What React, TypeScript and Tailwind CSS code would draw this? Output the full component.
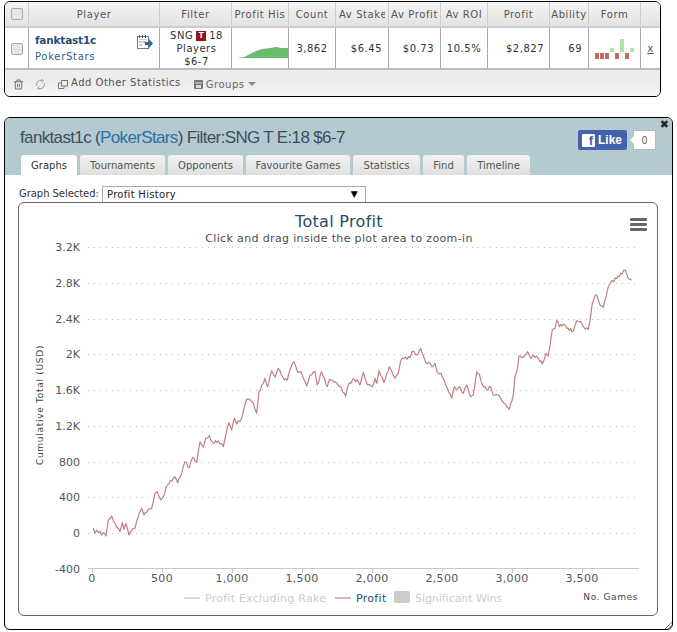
import { Trash2 } from "lucide-react";

const font = "font-['DejaVu_Sans',sans-serif]";

// Traced from the reference, page coordinates
const left = [
  [40, 565], [45, 580], [50, 570], [55, 578], [60, 574], [65, 585], [70, 578], [78, 588], [85, 540], [95, 528],
  [105, 550], [115, 565], [120, 575], [127, 548], [132, 568], [138, 550], [147, 585], [155, 572], [165, 565], [175, 530],
  [185, 505], [192, 525], [205, 508], [215, 505], [225, 460], [232, 455], [243, 480], [250, 470], [262, 435], [280, 415],
  [285, 410], [293, 428], [305, 400], [315, 365], [328, 383], [338, 352], [350, 367], [360, 305], [370, 322], [377, 295],
  [388, 287], [398, 308], [415, 303], [430, 320], [440, 270], [447, 248], [455, 270], [463, 235], [470, 252], [485, 235],
  [490, 215], [500, 178], [510, 178], [520, 190], [530, 220], [537, 155], [550, 130], [555, 115], [563, 140], [575, 92],
  [585, 112], [595, 85], [613, 120], [622, 120], [632, 85], [642, 65], [653, 98], [663, 95], [680, 138], [690, 105],
  [705, 95], [712, 135], [725, 95], [742, 140], [748, 118], [765, 125], [780, 140], [797, 168], [803, 140], [818, 118],
  [835, 125],
].map(([x, y]) => [80 + x / 3, 340 + y / 3]);

const right = [
  [0, 405], [10, 367], [20, 400], [37, 410], [45, 385], [50, 400], [57, 362], [72, 398], [88, 350], [105, 385],
  [115, 370], [122, 333], [132, 325], [150, 323], [157, 303], [172, 315], [182, 295], [197, 337], [210, 340], [215, 350],
  [225, 340], [232, 368], [243, 370], [255, 400], [275, 445], [283, 410], [290, 420], [297, 410], [310, 430], [320, 405],
  [332, 440], [340, 435], [350, 365], [358, 372], [365, 400], [380, 420], [392, 410], [400, 435], [415, 435], [432, 460],
  [448, 478], [460, 435], [465, 380], [472, 360], [477, 318], [490, 322], [503, 305], [513, 325], [520, 315], [535, 325],
  [547, 342], [558, 310], [565, 318], [577, 240], [585, 235], [590, 210], [598, 230], [610, 222], [620, 235], [640, 243],
  [650, 212], [662, 215], [672, 232], [685, 238], [690, 212], [697, 160], [705, 135], [710, 135], [720, 165], [730, 172],
  [738, 140], [745, 110], [752, 98], [770, 85], [795, 60], [805, 85], [815, 90],
].map(([x, y]) => [360 + x / 3, 250 + y / 3]);

// small repeatable wobble between the traced points, the real series is noisy
const traced = [...left, ...right];
const noisy: number[][] = [];
traced.forEach(([x, y], i) => {
  noisy.push([x, y]);
  const next = traced[i + 1];
  if (!next) return;
  const steps = Math.max(1, Math.floor((next[0] - x) / 1.3));
  for (let s = 1; s < steps; s++) {
    const t = s / steps;
    const wobble = Math.sin((i + 1) * 12.9898 + s * 78.233) * 1.3;
    noisy.push([x + (next[0] - x) * t, y + (next[1] - y) * t + wobble]);
  }
});

const profitLine = noisy
  .map(([x, y], i) => `${i === 0 ? "M" : "L"}${x.toFixed(1)} ${y.toFixed(1)}`)
  .join(" ");

const yTicks = [
  ["3.2K", 247], ["2.8K", 283], ["2.4K", 319], ["2K", 354], ["1.6K", 390],
  ["1.2K", 426], ["800", 462], ["400", 497], ["0", 533], ["-400", 569],
] as const;

const xTicks = [
  ["0", 92], ["500", 162], ["1,000", 232], ["1,500", 302],
  ["2,000", 372], ["2,500", 442], ["3,000", 512], ["3,500", 582],
] as const;

const headers = ["Player", "Filter", "Profit His", "Count", "Av Stake", "Av Profit", "Av ROI", "Profit", "Ability", "Form"];

const tabs = ["Graphs", "Tournaments", "Opponents", "Favourite Games", "Statistics", "Find", "Timeline"];
const tabWidths = ["w-[56px]", "w-[85px]", "w-[75px]", "w-[104px]", "w-[67px]", "w-[41px]", "w-[63px]"];

const gridCols = "grid-cols-[24px_131px_72px_57px_47px_53px_52px_47px_62px_39px_52px_1fr]";

const Check = () => (
  <span className="block h-3 w-3 rounded-[2px] border border-[#aaa] bg-[#e6e6e6]" />
);

const TopPanel = () => (
  <div className={`h-[96px] w-[657px] overflow-hidden rounded-md border border-black ${font} text-[10px] text-[#333]`}>
    <div className={`grid h-[26px] ${gridCols} border-b-2 border-[#ccc] bg-gradient-to-b from-[#f4f4f4] to-[#e2e2e2] tracking-[0.6px] text-[#555]`}>
      <div className="flex items-center justify-center border-r border-[#ccc]">
        <Check />
      </div>
      {headers.map((h) => (
        <div
          key={h}
          className={`flex items-center overflow-hidden whitespace-nowrap border-r border-[#ccc] ${
            h === "Av Stake" ? "justify-start px-[3px]" : "justify-center"
          }`}
        >
          <span className="min-w-0 overflow-hidden">{h}</span>
        </div>
      ))}
      <div />
    </div>
    <div className={`grid h-[42px] ${gridCols} border-b-2 border-[#bbb] bg-white tracking-[0.5px]`}>
      <div className="flex items-center justify-center border-r border-[#aaa]">
        <Check />
      </div>
      <div className="relative flex flex-col gap-[5px] border-r border-[#aaa] pl-[6px] pt-[6px]">
        <span className="text-[10.5px] font-bold leading-[12px] tracking-[-0.2px] text-[#1e4f7a]">fanktast1c</span>
        <span className="leading-[12px] tracking-[0.7px] text-[#2d5f86]">PokerStars</span>
        <svg className="absolute right-[6px] top-[7px]" width="16" height="15" viewBox="0 0 16 15">
          <rect x="0.5" y="1.5" width="11" height="12" fill="#fff" stroke="#6a7f96" />
          <rect x="2" y="4" width="8" height="1" fill="#c9d3dd" />
          <rect x="2" y="6" width="3" height="2" fill="#b9c8d8" />
          <rect x="6" y="6" width="3" height="2" fill="#d9a5a5" />
          <rect x="2" y="9" width="3" height="2" fill="#b9c8d8" />
          <path d="M2.5 0v3M5.5 0v3M8.5 0v3" stroke="#555" />
          <path d="M8 7h4V4l4 4.500-4 4.500V10H8z" fill="#2b6aa8" />
        </svg>
      </div>
      <div className="flex flex-col items-center justify-center border-r border-[#aaa] pl-[2px] leading-[13px]">
        <span className="flex items-center gap-[3px]">
          SNG
          <span className="flex h-[10px] w-[10px] items-center justify-center bg-[#8c1515] font-['Liberation_Sans',sans-serif] text-[9px] font-bold leading-none tracking-normal text-white">T</span>
          18
        </span>
        <span>Players</span>
        <span>$6-7</span>
      </div>
      <div className="flex items-end border-r border-[#aaa] pb-[10px]">
        <svg width="56" height="16" viewBox="0 0 56 16">
          <path d="M5 15L12 14L18 11L24 8L30 6L38 5L44 4L50 5L56 5V15Z" fill="#6dbb6d" />
        </svg>
      </div>
      <div className="flex items-center justify-center border-r border-[#aaa]">3,862</div>
      <div className="flex items-center justify-end border-r border-[#aaa] pr-[6px]">$6.45</div>
      <div className="flex items-center justify-end border-r border-[#aaa] pr-[6px]">$0.73</div>
      <div className="flex items-center justify-center border-r border-[#aaa]">10.5%</div>
      <div className="flex items-center justify-end border-r border-[#aaa] pr-[5px]">$2,827</div>
      <div className="flex items-center justify-end border-r border-[#aaa] pr-[6px]">69</div>
      <div className="border-r border-[#aaa]">
        <svg width="51" height="41" viewBox="0 0 51 41">
          <g fill="#c06a6a">
            <rect x="6" y="25" width="4" height="6" />
            <rect x="11" y="25" width="4" height="6" />
            <rect x="16" y="25" width="4" height="6" />
            <rect x="26" y="25" width="4" height="6" />
            <rect x="36" y="25" width="4" height="6" />
          </g>
          <g fill="#aee6a8">
            <rect x="21" y="20" width="4" height="4" />
            <rect x="31" y="11" width="4" height="13" />
            <rect x="41" y="20" width="4" height="4" />
          </g>
        </svg>
      </div>
      <div className="flex items-center justify-center text-[#2d5f86] underline">x</div>
    </div>
    <div className="flex h-[26px] items-center bg-gradient-to-b from-[#ececec] via-[#ececec] to-[#f5f5f5] pl-[8px] pt-[2px] tracking-[0.5px] text-[#555]">
      <Trash2 size={11} className="text-[#777]" strokeWidth={2.2} />
      <svg className="ml-[11px]" width="11" height="11" viewBox="0 0 11 11" fill="none" stroke="#999">
        <path d="M2 7A4 4 0 0 1 7 1.500M9 4A4 4 0 0 1 4 9.500" />
        <path d="M6.500 0l2 2-2 1.500M4.500 11l-2-2 2-1.500" />
      </svg>
      <svg className="ml-[12px]" width="10" height="10" viewBox="0 0 10 10" fill="none" stroke="#777">
        <rect x="3.500" y="1.500" width="6" height="5.500" />
        <path d="M3 4H.5v5.500H6V7.500" />
      </svg>
      <span className="ml-[3px] -mt-[4px]">Add Other Statistics</span>
      <svg className="ml-[13px]" width="9" height="9" viewBox="0 0 9 9">
        <rect width="9" height="9" rx="1" fill="#777" />
        <rect x="1" y="2.500" width="7" height="1" fill="#ddd" />
        <rect x="2" y="5" width="5" height="3" fill="#ddd" />
      </svg>
      <span className="ml-[3px] text-[#666]">Groups</span>
      <span className="ml-[4px] h-0 w-0 border-x-[4px] border-t-[4px] border-x-transparent border-t-[#888]" />
    </div>
  </div>
);

const LikeBox = () => (
  <div className="absolute right-[16px] top-[12px] flex items-center">
    <div className="flex h-[20px] w-[49px] items-center gap-[3px] rounded-[2px] bg-[#4263ab] pl-[4px] font-['Liberation_Sans',sans-serif] text-[12px] font-bold text-white">
      <span className="flex h-[13px] w-[13px] items-end justify-end rounded-[1px] bg-white pr-[2px] text-[13px] font-bold leading-[13px] text-[#4263ab]">f</span>
      Like
    </div>
    <div className="relative ml-[6px] flex h-[20px] w-[23px] items-center justify-center border border-[#bbb] bg-white font-['Liberation_Sans',sans-serif] text-[10px] text-[#555]">
      <span className="absolute -left-[4px] top-[6px] h-[6px] w-[6px] rotate-45 border-b border-l border-[#bbb] bg-white" />
      0
    </div>
  </div>
);

const Chart = () => (
  <div className="mx-[13px] h-[414px] w-[640px] rounded-md border border-[#666] bg-white">
    <svg width="638" height="412" viewBox="19 203 638 412" className="block">
      <text x="339" y="227" textAnchor="middle" fontSize="16" letterSpacing="0.3" fill="#274b6d" fontFamily="'DejaVu Sans', sans-serif">
        Total Profit
      </text>
      <text x="339" y="242" textAnchor="middle" fontSize="11" letterSpacing="0.35" fill="#4d4d4d" fontFamily="'DejaVu Sans', sans-serif">
        Click and drag inside the plot area to zoom-in
      </text>
      <g fill="#666">
        <rect x="630" y="218" width="17" height="3" rx="1" />
        <rect x="630" y="223" width="17" height="3" rx="1" />
        <rect x="630" y="228" width="17" height="3" rx="1" />
      </g>
      {yTicks.slice(0, -1).map(([label, y]) => (
        <line key={label} x1="88" x2="638" y1={y + 0.5} y2={y + 0.5} stroke="#bbb" strokeDasharray="1 5" />
      ))}
      <line x1="88" x2="639" y1="568.5" y2="568.5" stroke="#c8c8c8" />
      {xTicks.map(([label, x]) => (
        <line key={label} x1={x + 0.5} x2={x + 0.5} y1="568" y2="573" stroke="#c8c8c8" />
      ))}
      <g fontSize="11" fill="#555" fontFamily="'DejaVu Sans', sans-serif">
        {yTicks.map(([label, y]) => (
          <text key={label} x="80" y={y + 4} textAnchor="end">
            {label}
          </text>
        ))}
        {xTicks.map(([label, x]) => (
          <text key={label} x={x} y="582" textAnchor="middle" letterSpacing="0.3">
            {label}
          </text>
        ))}
      </g>
      <text transform="translate(43 405) rotate(-90)" textAnchor="middle" fontSize="9" letterSpacing="0.72" fill="#444" fontFamily="'DejaVu Sans', sans-serif">
        Cumulative Total (USD)
      </text>
      <path d={profitLine} fill="none" stroke="#bf8083" strokeWidth="1.2" strokeLinejoin="round" />
      <g fontSize="11" fontFamily="'DejaVu Sans', sans-serif">
        <line x1="184" x2="200" y1="598" y2="598" stroke="#ddd" strokeWidth="2" />
        <text x="205" y="602" fill="#ccc" letterSpacing="0.25">Profit Excluding Rake</text>
        <line x1="335" x2="351" y1="598" y2="598" stroke="#d8b6b8" strokeWidth="2" />
        <text x="356" y="602" fill="#274b6d" letterSpacing="0.3">Profit</text>
        <rect x="394" y="591" width="16" height="12" rx="2" fill="#ccc" />
        <text x="415" y="602" fill="#ccc" letterSpacing="-0.05">Significant Wins</text>
      </g>
      <text x="638" y="600" textAnchor="end" fontSize="9" letterSpacing="0.6" fill="#444" fontFamily="'DejaVu Sans', sans-serif">
        No. Games
      </text>
    </svg>
  </div>
);

const GraphPanel = () => (
  <div className={`relative mt-[20px] h-[513px] w-[669px] overflow-hidden rounded-md border border-black bg-white ${font} text-[10px] text-[#333]`}>
    <div className="relative h-[57px] bg-[#b4c9d0]">
      <div className="pl-[15px] pt-[10px] font-['Liberation_Sans',sans-serif] text-[17px] leading-[20px] tracking-[-0.65px] text-[#3e4f5a]">
        fanktast1c (<span className="text-[#2d6fa6]">PokerStars</span>) Filter:SNG T E:18 $6-7
      </div>
      <LikeBox />
      <span className="absolute right-[3px] top-[1px] text-[11px] font-bold leading-[12px] text-[#222]">✖</span>
      <div className="absolute bottom-0 left-[16px] flex gap-[3px]">
        {tabs.map((t, i) => (
          <div
            key={t}
            className={`flex h-[20px] items-center justify-center rounded-t-[3px] tracking-[0.02px] ${tabWidths[i]} ${
              i === 0 ? "bg-white text-[#333]" : "bg-gradient-to-b from-[#f2f2f2] to-[#dfdfdf] text-[#555]"
            }`}
          >
            {t}
          </div>
        ))}
      </div>
    </div>
    <div className="flex h-[27px] items-end pl-[14px]">
      <span className="w-[83px] whitespace-nowrap pb-[1px] tracking-[-0.05px] text-[#333]">Graph Selected:</span>
      <div className="flex h-[16px] w-[264px] items-center justify-between border border-b-0 border-[#aaa] pl-[4px] pr-[7px] tracking-[0.3px] text-[#222]">
        Profit History
        <span className="text-[9px] leading-none text-black">▼</span>
      </div>
    </div>
    <Chart />
    <svg className="absolute bottom-0 right-0" width="8" height="8" viewBox="0 0 8 8" stroke="#777">
      <path d="M1 8L8 1M4 8L8 4M6 8L8 6" />
    </svg>
  </div>
);

export default function App() {
  return (
    <div className="h-[632px] w-[677px] overflow-hidden bg-white pl-[4px] pt-[1px]">
      <TopPanel />
      <GraphPanel />
    </div>
  );
}
